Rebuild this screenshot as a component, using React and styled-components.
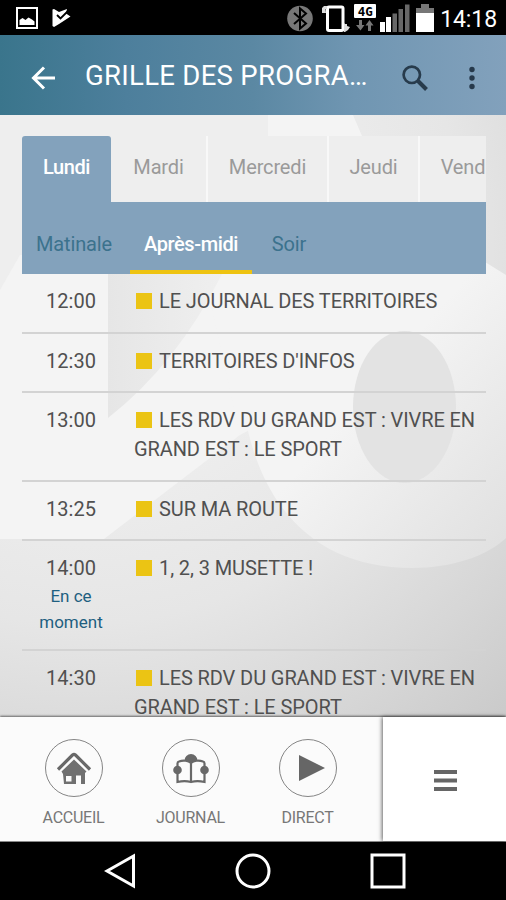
// App.jsx
import React from 'react';
import styled, { createGlobalStyle } from 'styled-components';

const GlobalStyle = createGlobalStyle`
  * {
    box-sizing: border-box;
  }
  body {
    margin: 0;
    background: #000;
    font-family: Roboto, 'Liberation Sans', sans-serif;
  }
  svg {
    display: block;
    flex-shrink: 0;
  }
  button {
    padding: 0;
    border: none;
    background: none;
    font: inherit;
    color: inherit;
  }
`;

const Screen = styled.div`
  width: 506px;
  height: 900px;
  display: flex;
  flex-direction: column;
  overflow: hidden;
`;

const StatusBar = styled.div`
  height: 35px;
  flex-shrink: 0;
  display: flex;
  align-items: flex-start;
  justify-content: space-between;
  padding: 0 9px 0 16px;
  background: #000;
  color: #fff;
`;

const StatusGroup = styled.div`
  display: flex;
  align-items: flex-start;
`;

const Network = styled.div`
  width: 22px;
  margin: 4px 4px 0 3px;
`;

const NetworkLabel = styled.div`
  height: 14px;
  background: #fff;
  color: #000;
  border-radius: 1px;
  text-align: center;
  font: bold 12.5px/15px 'DejaVu Sans Mono', monospace;
`;

const Clock = styled.span`
  margin-left: 6px;
  font-size: 23px;
  line-height: 39px;
  letter-spacing: -0.1px;
`;

const Header = styled.header`
  height: 80px;
  flex-shrink: 0;
  display: flex;
  align-items: center;
  padding: 5px 30px 0 31px;
  background: linear-gradient(90deg, #3a758c 0%, #4d7f9c 25%, #5b88a3 50%, #7096b2 70%, #82a1bc 100%);
  color: #fff;
  position: relative;
  box-shadow: 0 1px 3px rgba(0, 0, 0, 0.25);
`;

const Title = styled.h1`
  flex: 1;
  margin: -4px 33px 0 30px;
  font-size: 27.5px;
  line-height: 36px;
  font-weight: 400;
  letter-spacing: 0.3px;
  white-space: nowrap;
`;

const MoreButton = styled.button`
  margin-left: 40px;
`;

const Content = styled.main`
  position: relative;
  height: 602px;
  flex-shrink: 0;
  padding: 21px 20px 0 22px;
  overflow: hidden;
  background: #eee;
`;

const Backdrop = styled.svg`
  position: absolute;
  top: 0;
  left: 0;
`;

const Schedule = styled.section`
  position: relative;
`;

const Tabs = styled.div`
  height: 66px;
  display: flex;
  overflow: hidden;
`;

const Tab = styled.button`
  width: ${({ $width }) => $width}px;
  flex-shrink: 0;
  padding-bottom: 4px;
  background: ${({ $active }) => ($active ? '#83a2bc' : '#eee')};
  color: ${({ $active }) => ($active ? '#fff' : '#9a9a9a')};
  font-size: 20px;
  font-weight: ${({ $active }) => ($active ? 500 : 400)};
  letter-spacing: ${({ $active }) => ($active ? '-0.4px' : '-0.15px')};
  border-radius: ${({ $active }) => ($active ? '3px 3px 0 0' : '0')};
  border-right: ${({ $active }) => ($active ? 'none' : '2px solid #f8f8f8')};
`;

const SubTabs = styled.div`
  height: 72px;
  display: flex;
  background: #83a2bc;
`;

const SubTab = styled.button`
  width: ${({ $width }) => $width}px;
  margin-left: ${({ $gap }) => $gap}px;
  padding-top: 16px;
  border-bottom: 4px solid ${({ $active }) => ($active ? '#eec311' : 'transparent')};
  color: ${({ $active }) => ($active ? '#fff' : '#3b728d')};
  font-size: 20px;
  font-weight: ${({ $active }) => ($active ? 500 : 400)};
  letter-spacing: ${({ $active }) => ($active ? '-0.4px' : '-0.15px')};
`;

const Row = styled.div`
  display: flex;
  height: ${({ $height }) => $height}px;
  padding-top: 13px;
  border-bottom: 2px solid #d3d3d3;
  color: #505050;
  font-size: 20px;
  line-height: 29px;
`;

const TimeCell = styled.div`
  width: 98px;
  text-align: center;
`;

const Now = styled.div`
  margin: 1px 12px 0;
  color: #1e5f80;
  font-size: 17px;
  line-height: 25.5px;
`;

const Show = styled.div`
  margin-left: 14px;
  flex: 1;
  white-space: pre-line;
  letter-spacing: -0.1px;
`;

const Marker = styled.span`
  display: inline-block;
  width: 16px;
  height: 16px;
  margin: 0 7px -1px 2px;
  background: #ebc414;
`;

const BottomBar = styled.nav`
  position: relative;
  height: 125px;
  flex-shrink: 0;
  display: flex;
  background: #fbfbfb;
  box-shadow: 0 -1px 2px rgba(0, 0, 0, 0.55);
  border-bottom: 1px solid #888;
`;

const Shortcuts = styled.div`
  flex: 1;
  display: flex;
  padding-left: 15px;
`;

const Shortcut = styled.button`
  width: 117px;
  display: flex;
  flex-direction: column;
  align-items: center;
  padding-top: 22px;
  color: #777;
  font-size: 16px;
  line-height: 20px;
  letter-spacing: -0.25px;
`;

const Circle = styled.span`
  width: 58px;
  height: 58px;
  margin: 0 0 11px 1px;
  display: flex;
  align-items: center;
  justify-content: center;
  border: 1px solid #858585;
  border-radius: 50%;
`;

const MenuButton = styled.button`
  width: 123px;
  display: flex;
  align-items: center;
  justify-content: center;
  padding: 3px 0 0 1px;
  background: #fff;
  box-shadow: -1px 0 4px rgba(0, 0, 0, 0.6);
`;

const SystemNav = styled.div`
  flex: 1;
  display: flex;
  align-items: center;
  justify-content: center;
  gap: 99px;
  padding-left: 3px;
  background: #000;
`;

const days = [
  { label: 'Lundi', width: 89, active: true },
  { label: 'Mardi', width: 97 },
  { label: 'Mercredi', width: 121 },
  { label: 'Jeudi', width: 91 },
  { label: 'Vend', width: 88 },
];

const periods = [
  { label: 'Matinale', width: 104, gap: 0 },
  { label: 'Après-midi', width: 122, gap: 4, active: true },
  { label: 'Soir', width: 74, gap: 0 },
];

const shows = [
  { time: '12:00', title: 'LE JOURNAL DES TERRITOIRES', height: 60 },
  { time: '12:30', title: "TERRITOIRES D'INFOS", height: 59 },
  { time: '13:00', title: 'LES RDV DU GRAND EST : VIVRE EN\nGRAND EST : LE SPORT', height: 89 },
  { time: '13:25', title: 'SUR MA ROUTE', height: 59 },
  { time: '14:00', title: '1, 2, 3 MUSETTE !', height: 110, now: true },
  { time: '14:30', title: 'LES RDV DU GRAND EST : VIVRE EN\nGRAND EST : LE SPORT', height: 89 },
];

const PictureIcon = () => (
  <svg width="22" height="22" viewBox="0 0 22 22" style={{ marginTop: 7 }}>
    <rect x="1" y="1" width="20" height="20" fill="none" stroke="#fff" strokeWidth="2" />
    <path d="M3.500 18v-5l3-2 3 2 3-2.500 3.500 2 2.500 2V18z" fill="#fff" />
  </svg>
);

const PlayCheckIcon = () => (
  <svg width="20" height="20" viewBox="0 0 20 20" style={{ margin: '8px 0 0 14px' }}>
    <path d="M.500 1.500 2 1l5 3 8-3-1 4.500 4.500 3L7 16l-5 3-1.500-1z" fill="#fff" />
    <path d="m5 7 3.500 3.500L16 3" fill="none" stroke="#000" strokeWidth="1.800" />
  </svg>
);

const BluetoothIcon = () => (
  <svg width="26" height="28" viewBox="0 0 26 28" style={{ marginTop: 5 }}>
    <circle cx="13" cy="13.500" r="12.800" fill="#777" />
    <path d="m7 8 12 10.500-6 5V3.500l6 5L7 19" fill="none" stroke="#000" strokeWidth="2" />
  </svg>
);

const RotateIcon = () => (
  <svg width="30" height="28" viewBox="0 0 30 28" style={{ margin: '4px 0 0 8px' }}>
    <rect x="6.500" y="3" width="15.500" height="23.500" rx="1.500" fill="none" stroke="#fff" strokeWidth="3" />
    <path d="M1 9V4l2-2h3v3H4.500L5 9zM24 28h-1V19l1 1h2v2l3 1-2 3z" fill="#ddd" />
  </svg>
);

const DataArrows = () => (
  <svg width="22" height="14" viewBox="0 0 22 14">
    <path d="M5 2h3v5h2.500l-4 5.500L2 7h3zM14 13h3V7.500h2.500l-4-5.500-4 5.500H14z" fill="#777" />
  </svg>
);

const SignalIcon = () => (
  <svg width="30" height="28" viewBox="0 0 30 28" style={{ marginTop: 4 }}>
    <path d="M0 18h5v10H0zM6 13h5v15H6z" fill="#fff" />
    <path d="M12.500 9.500h4.500V28h-4.500zM18.500 5H23v23h-4.500zM25 .500h4.500V28H25z" fill="#686868" />
  </svg>
);

const BatteryIcon = () => (
  <svg width="18" height="28" viewBox="0 0 18 28" style={{ margin: '4px 0 0 6px' }}>
    <path d="M5 0h8v4h5v6H0V4h5z" fill="#777" />
    <path d="M0 9h18v19H0z" fill="#fff" />
  </svg>
);

const BackArrow = () => (
  <svg width="24" height="24" viewBox="0 0 24 24" fill="none" stroke="#fff" strokeWidth="3">
    <path d="M13 1.500 2.500 12 13 22.500M2.500 12H24" />
  </svg>
);

const SearchIcon = () => (
  <svg width="26" height="26" viewBox="0 0 26 26" fill="none" stroke="#273b4c">
    <circle cx="9.800" cy="9.800" r="8.200" strokeWidth="2.700" />
    <path d="m16 16 8.500 8.500" strokeWidth="4" />
  </svg>
);

const MoreIcon = () => (
  <svg width="8" height="24" viewBox="0 0 8 24" fill="#26394b">
    <circle cx="4" cy="3.500" r="2.700" />
    <circle cx="4" cy="12" r="2.700" />
    <circle cx="4" cy="20.500" r="2.700" />
  </svg>
);

const HomeIcon = () => (
  <svg width="36" height="36" viewBox="0 0 36 36">
    <path d="M2 19.500 16.500 5q1.500-1.200 3 0L34 19.500" fill="none" stroke="#686868" strokeWidth="3.200" />
    <path d="m18 9.500 12.500 12-1.500 1.500V34h-4v-8.500h-5V34H8l-1-10-1.500-2.500zM10 26v5.500h5.500V26z" fill="#707070" fillRule="evenodd" />
  </svg>
);

const ReaderIcon = () => (
  <svg width="36" height="34" viewBox="0 0 36 34">
    <path d="M11.500 9.500a6.500 6.500 0 1 1 13 0L18 12z" fill="#686868" />
    <path d="M18 12c-2.500-2.500-8-3-12-1.500-1 .300-1.500 1-1.500 2V31c4.500-1 9.500-1 13.500 0 4-1 9-1 13.500 0V12.500c0-1-.500-1.700-1.500-2-4-1.500-9.500-1-12 1.500v19" fill="none" stroke="#686868" strokeWidth="2.200" />
    <circle cx="4.500" cy="19" r="4.300" fill="#686868" />
    <circle cx="31.500" cy="19" r="4.300" fill="#686868" />
  </svg>
);

const PlayIcon = () => (
  <svg width="26" height="26" viewBox="0 0 26 26" style={{ marginLeft: 8 }}>
    <path d="M0 0v26l26-13z" fill="#666" />
  </svg>
);

const MenuIcon = () => (
  <svg width="23" height="22" viewBox="0 0 23 22">
    <path d="M0 0h23v4H0zM0 8.500h23v4H0zM0 17h23v4H0z" fill="#666" />
  </svg>
);

// Oversized figures showing through behind the schedule
const BackdropArt = () => (
  <Backdrop width="506" height="602" viewBox="0 115 506 602">
    <defs>
      <radialGradient id="shade" gradientUnits="userSpaceOnUse" cx="80" cy="240" r="640">
        <stop offset="0.350" stopColor="#eee" />
        <stop offset="0.600" stopColor="#e6e6e6" />
        <stop offset="0.850" stopColor="#d5d5d5" />
        <stop offset="1" stopColor="#cacaca" />
      </radialGradient>
      <linearGradient id="figure" x1="0" y1="0" x2="1" y2="1">
        <stop offset="0.450" stopColor="#f4f4f4" />
        <stop offset="1" stopColor="#dfdfdf" />
      </linearGradient>
      <linearGradient id="fold" x1="0" y1="0" x2="1" y2="0">
        <stop offset="0" stopColor="#e6e6e6" />
        <stop offset="1" stopColor="#efefef" />
      </linearGradient>
    </defs>
    <rect y="115" width="506" height="602" fill="url(#shade)" />
    <path d="M0 290 20 255H240V435L104 539H0z" fill="#f4f4f4" />
    <path d="M268 115h85l9 21H268zM200 255H440V330L240 435z" fill="#f4f4f4" />
    <path d="M240 380C250 500 310 568 412 568c40 0 75-12 94-30V275l-21-13H240z" fill="url(#figure)" />
    <path d="M108 274h114q-45 90-114 144z" fill="url(#fold)" />
    <ellipse cx="404.500" cy="407" rx="51.500" ry="76" fill="#e3e3e3" />
  </Backdrop>
);

export default function App() {
  return (
    <>
      <GlobalStyle />
      <Screen>
        <StatusBar>
          <StatusGroup>
            <PictureIcon />
            <PlayCheckIcon />
          </StatusGroup>
          <StatusGroup>
            <BluetoothIcon />
            <RotateIcon />
            <Network>
              <NetworkLabel>4G</NetworkLabel>
              <DataArrows />
            </Network>
            <SignalIcon />
            <BatteryIcon />
            <Clock>14:18</Clock>
          </StatusGroup>
        </StatusBar>

        <Header>
          <button aria-label="Retour"><BackArrow /></button>
          <Title>GRILLE DES PROGRA…</Title>
          <button aria-label="Rechercher"><SearchIcon /></button>
          <MoreButton aria-label="Options"><MoreIcon /></MoreButton>
        </Header>

        <Content>
          <BackdropArt />
          <Schedule>
            <Tabs>
              {days.map(day => (
                <Tab key={day.label} $width={day.width} $active={day.active}>{day.label}</Tab>
              ))}
            </Tabs>
            <SubTabs>
              {periods.map(period => (
                <SubTab key={period.label} $width={period.width} $gap={period.gap} $active={period.active}>
                  {period.label}
                </SubTab>
              ))}
            </SubTabs>
            {shows.map(show => (
              <Row key={show.time} $height={show.height}>
                <TimeCell>
                  {show.time}
                  {show.now && <Now>En ce moment</Now>}
                </TimeCell>
                <Show><Marker />{show.title}</Show>
              </Row>
            ))}
          </Schedule>
        </Content>

        <BottomBar>
          <Shortcuts>
            <Shortcut><Circle><HomeIcon /></Circle>ACCUEIL</Shortcut>
            <Shortcut><Circle><ReaderIcon /></Circle>JOURNAL</Shortcut>
            <Shortcut><Circle><PlayIcon /></Circle>DIRECT</Shortcut>
          </Shortcuts>
          <MenuButton aria-label="Menu"><MenuIcon /></MenuButton>
        </BottomBar>

        <SystemNav>
          <svg width="32" height="36" viewBox="0 0 32 36" fill="none" stroke="#fff" strokeWidth="3">
            <path d="M29.500 3v30L3 18z" />
          </svg>
          <svg width="36" height="36" viewBox="0 0 36 36" fill="none" stroke="#fff" strokeWidth="3">
            <circle cx="18" cy="18" r="16" />
          </svg>
          <svg width="36" height="36" viewBox="0 0 36 36" fill="none" stroke="#fff" strokeWidth="3">
            <rect x="2" y="2" width="32" height="32" />
          </svg>
        </SystemNav>
      </Screen>
    </>
  );
}
